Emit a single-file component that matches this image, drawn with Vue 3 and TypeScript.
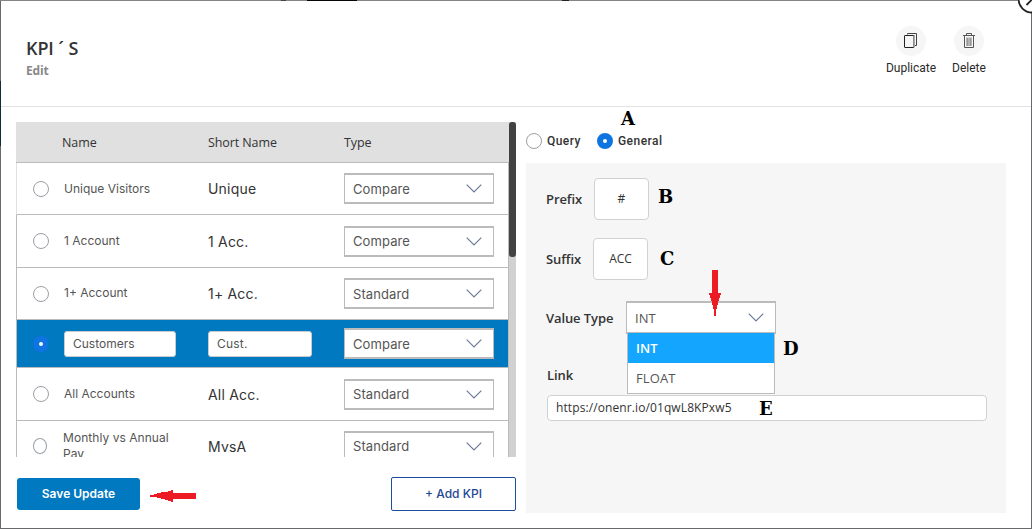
<script setup lang="ts">
import { ref } from 'vue'

interface Kpi {
  name: string
  short: string
  type: 'Compare' | 'Standard'
  size: string
}

const kpis: Kpi[] = [
  { name: 'Unique Visitors', short: 'Unique', type: 'Compare', size: 'r52 first' },
  { name: '1 Account', short: '1 Acc.', type: 'Compare', size: 'r53 raised' },
  { name: '1+ Account', short: '1+ Acc.', type: 'Standard', size: 'r52 raised' },
  { name: 'Customers', short: 'Cust.', type: 'Compare', size: 'r48' },
  { name: 'All Accounts', short: 'All Acc.', type: 'Standard', size: 'r53 raised' },
  { name: 'Monthly vs Annual Pay', short: 'MvsA', type: 'Standard', size: 'r51 last' },
]
const selected = ref(3)
const prefix = ref('#')
const suffix = ref('ACC')
const link = ref('https://onenr.io/01qwL8KPxw5')
const valueTypes = ['INT', 'FLOAT']
const valueType = ref('INT')
</script>

<template>
  <div class="backdrop">
    <div class="modal">
      <header class="head">
        <div class="titles">
          <h1>KPI ´ S</h1>
          <p>Edit</p>
        </div>
        <div class="actions">
          <button class="action">
            <span class="disc">
              <svg width="30" height="30" viewBox="0 0 30 30" fill="none">
                <path d="M11.5 8.5V7.5H20.5V19.5H18.5" stroke="#444" />
                <rect x="8.5" y="9.5" width="9.5" height="12" rx=".5" stroke="#222" />
                <path d="M18.5 9V20" stroke="#aaa" />
              </svg>
            </span>
            <span>Duplicate</span>
          </button>
          <button class="action">
            <span class="disc">
              <svg width="30" height="30" viewBox="0 0 30 30" fill="none">
                <path d="M9 9.5H21M12.5 9V7.5H17.5V9M10.5 10V21.5H19.5V10" stroke="#555" />
                <rect x="12" y="11.5" width="6" height="8.5" fill="#b4b4b4" />
                <path d="M13.5 12V20M16.5 12V20" stroke="#999" />
              </svg>
            </span>
            <span>Delete</span>
          </button>
        </div>
      </header>

      <main class="body">
        <section class="left">
          <div class="viewport">
            <div class="table">
              <div class="thead">
                <span class="c1">Name</span>
                <span class="c2">Short Name</span>
                <span class="c3">Type</span>
              </div>
              <div
                v-for="(k, i) in kpis"
                :key="k.name"
                class="row"
                :class="[k.size, { active: i === selected }]"
              >
                <i class="radio" :class="{ on: i === selected }" @click="selected = i"></i>
                <div class="name">
                  <span v-if="i === selected" class="field">{{ k.name }}</span>
                  <span v-else>{{ k.name }}</span>
                </div>
                <div class="short">
                  <span v-if="i === selected" class="field">{{ k.short }}</span>
                  <span v-else>{{ k.short }}</span>
                </div>
                <div class="select">
                  <span>{{ k.type }}</span>
                  <svg width="16" height="9" viewBox="0 0 16 9" fill="none"><path d="M.7 .7L8 8L15.3 .7" stroke="#6b7a99" stroke-width="1.2" /></svg>
                </div>
              </div>
            </div>
            <div class="track"><div class="thumb"></div></div>
          </div>
          <footer class="foot">
            <button class="save"><span>Save Update</span></button>
            <button class="add"><span>+ Add KPI</span></button>
          </footer>
        </section>

        <section class="right">
          <div class="tabs">
            <i class="radio"></i><span class="tab q">Query</span>
            <i class="radio on"></i><span class="tab g">General</span>
          </div>
          <div class="panel">
            <div class="line l1"><label>Prefix</label><span class="box">{{ prefix }}</span></div>
            <div class="line l2"><label>Suffix</label><span class="box">{{ suffix }}</span></div>
            <div class="line l3">
              <label>Value Type</label>
              <div class="select vt">
                <span>{{ valueType }}</span>
                <svg width="16" height="9" viewBox="0 0 16 9" fill="none"><path d="M.7 .7L8 8L15.3 .7" stroke="#6b7a99" stroke-width="1.2" /></svg>
                <div class="menu">
                  <div v-for="v in valueTypes" :key="v" class="opt" :class="{ cur: v === valueType }" @click="valueType = v"><span>{{ v }}</span></div>
                </div>
              </div>
            </div>
            <label class="linklabel">Link</label>
            <div class="link"><span>{{ link }}</span></div>
          </div>
        </section>
      </main>
    </div>

    <svg class="close" width="14" height="14" viewBox="0 0 14 14" fill="none">
      <circle cx="14" cy="-1" r="13.5" fill="#fff" stroke="#222" stroke-width="1.8" />
      <path d="M8.5 5L14 -.5M9 -5L14 0" stroke="#222" stroke-width="1.8" />
    </svg>

    <span class="mark a">A</span>
    <span class="mark b">B</span>
    <span class="mark c">C</span>
    <span class="mark d">D</span>
    <span class="mark e">E</span>
    <svg class="arrow down" width="12" height="46" viewBox="0 0 12 46" shape-rendering="crispEdges">
      <path d="M3 0H9V23H12V25H11L10 31H9L8 39H7V46H5V39H4L3 31H2L1 25H0V23H3Z" fill="#ed1c24" />
    </svg>
    <svg class="arrow back" width="46" height="12" viewBox="0 0 46 12" shape-rendering="crispEdges">
      <path d="M46 3V9H23V12H21V11L15 10V9L7 8V7H0V5L7 4V3L15 2L21 1V0H23V3Z" fill="#ed1c24" />
    </svg>
  </div>
</template>

<style>
html,
body {
  margin: 0;
  overflow: hidden;
}
</style>

<style scoped>
* {
  box-sizing: border-box;
}
.backdrop {
  position: relative;
  width: 1032px;
  height: 529px;
  padding: 1px;
  overflow: hidden;
  background:
    linear-gradient(90deg, transparent 281px, #444 281px 286px, transparent 286px 307px, #050505 307px 357px, transparent 357px 562px, #222 562px 569px, transparent 569px) 0 0 / 100% 1px no-repeat,
    linear-gradient(#858585, #858585) 0 0 / 100% 1px no-repeat,
    linear-gradient(#102a3e, #102a3e) 0 81px / 1px 65px no-repeat,
    #68696b;
  font-family: "Open Sans", "Noto Sans", sans-serif;
  color: #333;
}
.modal {
  width: 1030px;
  height: 527px;
  background: #fff;
}
button {
  font: inherit;
  margin: 0;
  padding: 0;
  border: 0;
  background: none;
}
span {
  white-space: nowrap;
}
.head {
  height: 106px;
  border-bottom: 1px solid #e2e2e2;
  display: flex;
  justify-content: space-between;
}
.titles {
  padding: 35px 0 0 25px;
}
h1 {
  margin: 0;
  font-size: 18px;
  line-height: 24px;
  font-weight: 600;
  letter-spacing: -0.1px;
}
.titles p {
  margin: 0;
  padding-top: 1px;
  font-size: 12px;
  line-height: 20px;
  font-weight: 700;
  letter-spacing: -0.2px;
  color: #888;
}
.actions {
  display: flex;
  padding: 25px 37px 0 0;
  gap: 8px;
  font-family: Roboto, sans-serif;
  font-size: 12px;
  letter-spacing: -0.05px;
}
.action {
  display: flex;
  flex-direction: column;
  align-items: center;
  gap: 4px;
  width: 50px;
  line-height: 16px;
  color: #2a2a2a;
}
.disc {
  width: 30px;
  height: 30px;
  border-radius: 50%;
  background: #f6f6f6;
}
.disc svg {
  display: block;
}
.body {
  display: flex;
  padding: 15px 24px 0 15px;
  gap: 10px;
}
.left {
  width: 500px;
}
.viewport {
  display: flex;
  height: 335px;
  overflow: hidden;
}
.table {
  width: 493px;
}
.thead {
  display: flex;
  height: 41px;
  padding-left: 46px;
  background: #e0e0e0;
  border-bottom: 1px solid #bbb;
  font-size: 12.5px;
  line-height: 41px;
  letter-spacing: -0.1px;
}
.c1 {
  width: 146px;
}
.c2 {
  width: 136px;
}
.row {
  display: flex;
  align-items: center;
  border: 1px solid #bbb;
  border-top: 0;
  padding-left: 16px;
  font-family: Inter, sans-serif;
}
.row.first {
  border-left-color: #e0e0e0;
}
.r51 {
  height: 51px;
}
.r52 {
  height: 52px;
}
.r53 {
  height: 53px;
}
.r48 {
  height: 48px;
}
.radio {
  flex: none;
  width: 16px;
  height: 16px;
  border: 1px solid #9a9fa3;
  border-radius: 50%;
  background: #fff;
}
.radio.on {
  border: 6px solid #0d74e1;
}
.name {
  flex: none;
  width: 159px;
  padding-left: 15px;
  font-size: 12px;
  line-height: 15px;
  color: #555;
}
.raised .name {
  padding-bottom: 2px;
}
.last .radio {
  width: 14px;
}
.last .name {
  width: 161px;
  padding: 0 30px 0 16px;
  line-height: 16px;
  letter-spacing: 0.05px;
}
.last .name span {
  white-space: normal;
}
.short {
  flex: none;
  width: 136px;
  font-size: 14px;
  letter-spacing: 0.2px;
  color: #333;
}
.field {
  display: block;
  height: 26px;
  border: 1px solid #ccc;
  border-radius: 3px;
  background: #fff;
  padding-left: 8px;
  font-size: 12px;
  line-height: 24px;
  color: #555;
}
.name .field {
  width: 112px;
}
.short .field {
  width: 104px;
}
.active {
  background: #0079c1;
}
.select {
  flex: none;
  display: flex;
  align-items: center;
  justify-content: space-between;
  width: 150px;
  height: 31px;
  padding: 0 11px 0 8px;
  border: 1px solid #bbb;
  border-top-width: 2px;
  border-bottom-width: 2px;
  background: #fff;
  font-size: 13px;
  letter-spacing: 0.1px;
  color: #555;
}
.track {
  width: 7px;
  background: #d1d1d1;
}
.thumb {
  height: 135px;
  border-radius: 3px;
  background: #424242;
}
.foot {
  display: flex;
  justify-content: space-between;
  padding: 20px 0 0 1px;
  font-family: Inter, sans-serif;
  font-size: 12px;
}
.save {
  width: 123px;
  height: 32px;
  margin-top: 1px;
  padding-bottom: 2px;
  border-radius: 3px;
  background: #0079c1;
  color: #fff;
  font-weight: 600;
}
.add {
  width: 125px;
  height: 34px;
  padding-bottom: 2px;
  border: 1px solid #1b4e9b;
  border-radius: 2px;
  color: #1d4795;
  font-weight: 500;
}
.right {
  width: 480px;
}
.tabs {
  display: flex;
  align-items: center;
  height: 41px;
  padding-bottom: 3px;
}
.tab {
  font-family: Roboto, sans-serif;
  font-size: 12px;
  font-weight: 500;
  letter-spacing: 0.45px;
  margin-left: 5px;
}
.tab.q {
  width: 50px;
}
.panel {
  height: 350px;
  padding: 15px 19px 0 20px;
  background: #f6f6f6;
  font-size: 12.5px;
}
.line {
  display: flex;
  align-items: center;
}
.line label,
.linklabel {
  font-size: 13px;
  font-weight: 600;
  letter-spacing: -0.1px;
}
.l1 label {
  width: 48px;
}
.l2 label {
  width: 47px;
}
.l3 label {
  width: 80px;
}
.l2 {
  margin-top: 18px;
}
.l3 {
  margin-top: 21px;
}
.box {
  width: 55px;
  height: 42px;
  border: 1px solid #ced2d3;
  border-radius: 4px;
  background: #fff;
  text-align: center;
  font-size: 12px;
  line-height: 39px;
}
.vt {
  position: relative;
  height: 33px;
}
.menu {
  position: absolute;
  left: 0;
  top: 30px;
  width: 148px;
  height: 61px;
  border: 1px solid #bbb;
  border-top: 0;
  background: #fff;
  line-height: 30px;
}
.opt {
  height: 30px;
  padding-left: 8px;
}
.opt.cur {
  background: #14a5ff;
  color: #fff;
  font-weight: 600;
}
.linklabel {
  display: block;
  padding: 31px 0 0 1px;
  line-height: 20px;
}
.link {
  width: 440px;
  height: 26px;
  margin: 10px 0 0 1px;
  padding-left: 8px;
  border: 1px solid #ced2d3;
  border-radius: 4px;
  background: #fff;
  font-size: 12px;
  line-height: 24px;
  letter-spacing: 0.1px;
}
.close {
  position: absolute;
  right: 0;
  top: 0;
}
.mark {
  position: absolute;
  color: #000;
  font: bold 18px/20px "DejaVu Serif", serif;
}
.a { left: 621px; top: 109px; }
.b { left: 658px; top: 187px; }
.c { left: 660px; top: 249px; }
.d { left: 783px; top: 339px; }
.e { left: 759px; top: 399px; }
.arrow {
  position: absolute;
}
.down {
  left: 709px;
  top: 270px;
}
.back {
  left: 150px;
  top: 490px;
}
</style>
